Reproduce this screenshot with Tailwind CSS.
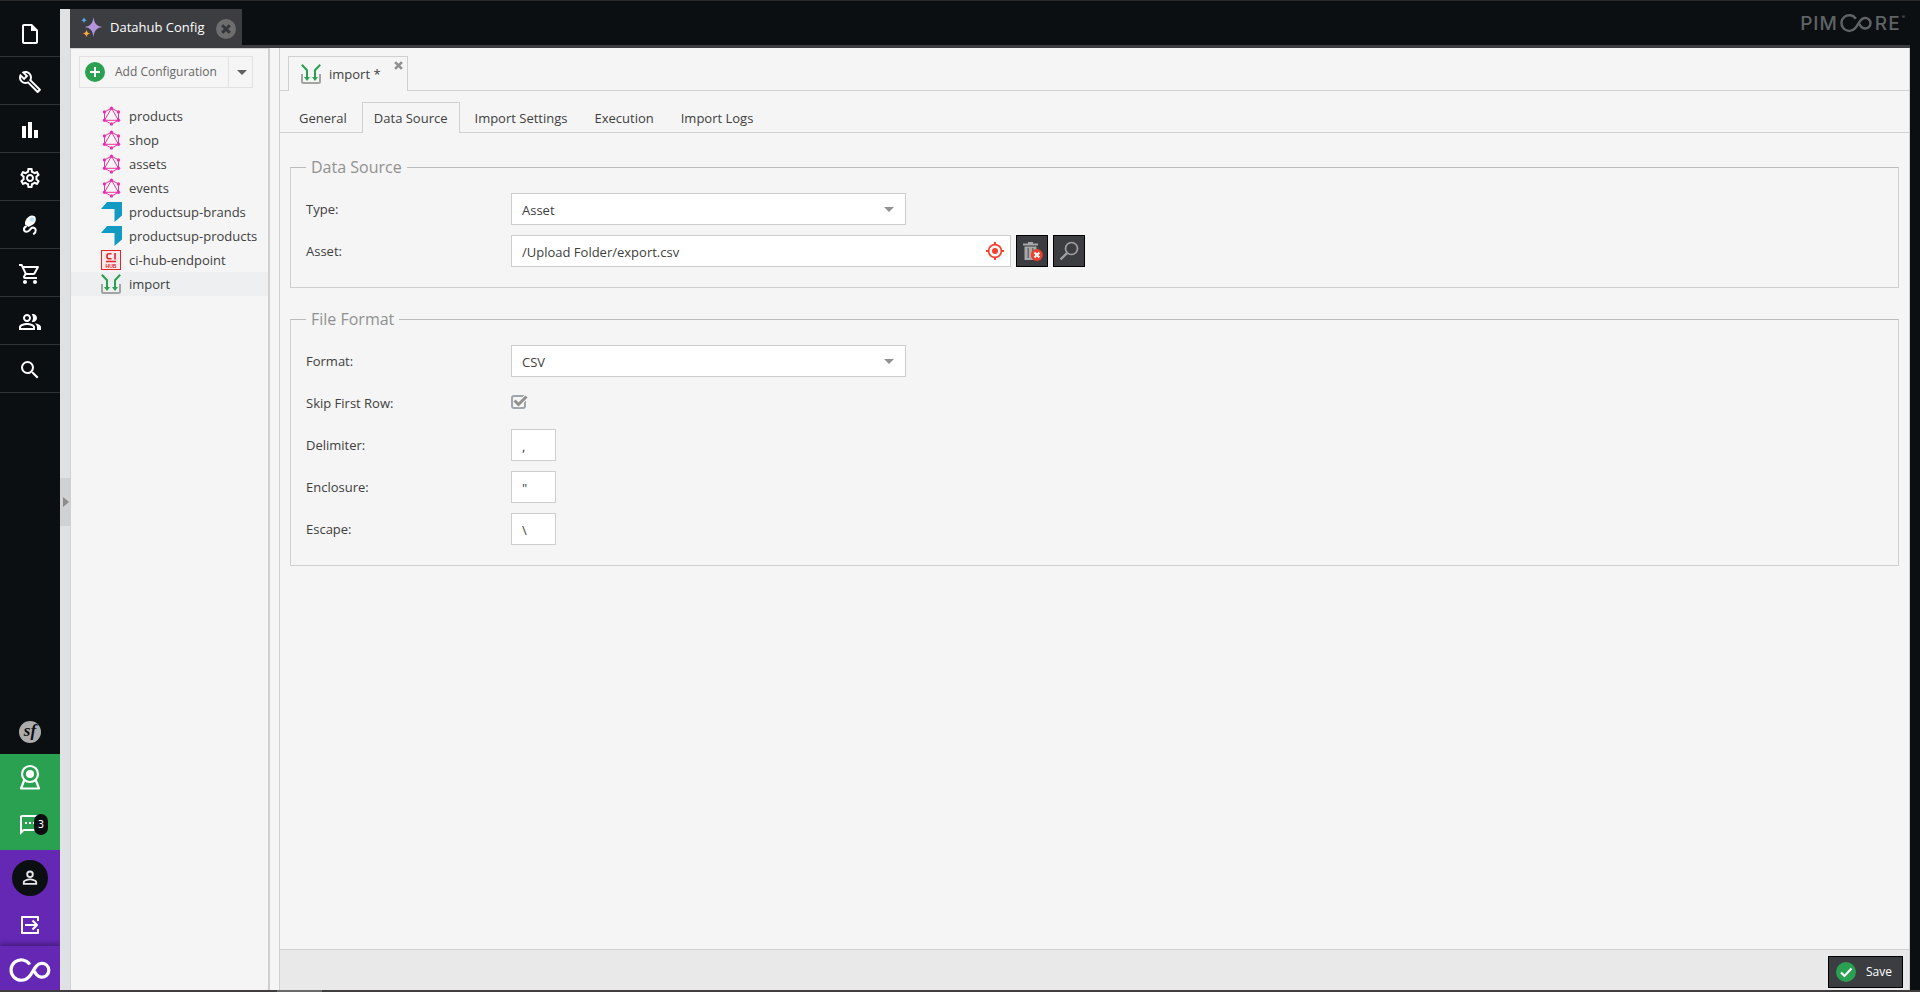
<!DOCTYPE html>
<html lang="en">
<head>
<meta charset="utf-8">
<title>Datahub Config</title>
<script src="https://cdn.jsdelivr.net/npm/@tailwindcss/browser@4"></script>
</head>
<body class="flex min-h-screen flex-col border-t border-[#2b2b2b] bg-[#0c0f12] font-['Open_Sans',sans-serif] text-[13px] leading-5 text-[#404040]">
<svg class="hidden" aria-hidden="true">
  <symbol id="graphql" viewBox="0 0 20 20"><g fill="none" stroke="#e535ab" stroke-width="1"><path d="M10.500 2.200 17.500 6v8.300l-7 3.800-7-3.800V6z"/><path d="M10.500 2.200 3.500 14.300h14z"/></g><g fill="#e535ab"><circle cx="10.500" cy="2.200" r="1.700"/><circle cx="17.500" cy="6" r="1.700"/><circle cx="17.500" cy="14.300" r="1.700"/><circle cx="10.500" cy="18" r="1.700"/><circle cx="3.500" cy="14.300" r="1.700"/><circle cx="3.500" cy="6" r="1.700"/></g></symbol>
  <symbol id="productsup" viewBox="0 0 21 20"><path fill="#129bc2" d="M6 0h15v13.500L13.500 20V7H0z"/></symbol>
  <symbol id="import" viewBox="0 0 20 20"><path fill="none" stroke="#a3a3a3" stroke-width="2" d="M1 10v7.500Q1 19 2.500 19h15q1.500 0 1.500-1.500V10"/><g fill="none" stroke="#2aa151" stroke-width="2"><path d="M.8.8 6 6.200V15M19.200.8 14 6.200V15"/></g><path fill="#2aa151" d="M3 13h6l-3 4zM11 13h6l-3 4z"/></symbol>
  <symbol id="cross" viewBox="0 0 10 10"><path stroke="currentColor" stroke-width="3" d="m1.200 1.200 7.600 7.600M8.800 1.200 1.200 8.800"/></symbol>
  <symbol id="infinity" viewBox="0 0 42 26"><path fill="none" stroke="currentColor" stroke-width="3.200" d="M20.800 7.500A10.200 10.200 0 1 0 20 19.700C23 17 24.500 12 27.500 9A6.900 6.900 0 1 1 27.500 17.500C26.500 16.500 26 15.500 25.500 14"/></symbol>
</svg>

<div class="flex flex-1">
  <nav class="flex w-[60px] shrink-0 flex-col pt-2 text-white" aria-label="Main">
    <button aria-label="File" class="flex h-12 items-center justify-center border-b border-[#303336] pt-[3px]"><svg class="size-6 fill-current" viewBox="0 0 24 24"><path d="M14 2H6c-1.100 0-2 .9-2 2v16c0 1.100.9 2 2 2h12c1.100 0 2-.9 2-2V8zm4 18H6V4h7v5h5z"/></svg></button>
    <button aria-label="Tools" class="flex h-12 items-center justify-center border-b border-[#303336] pt-[3px]"><svg class="size-6 fill-current" viewBox="0 0 24 24"><path d="M22.610 18.990l-9.080-9.080c.93-2.340.45-5.100-1.440-7C9.790.61 6.210.4 3.660 2.260L7.500 6.110 6.080 7.520 2.250 3.690C.39 6.230.6 9.820 2.900 12.110c1.860 1.860 4.570 2.350 6.890 1.480l9.110 9.110c.39.39 1.020.39 1.410 0l2.300-2.300c.4-.38.4-1.010 0-1.410zm-3 1.600l-9.460-9.460c-.61.45-1.290.72-2 .82-1.360.2-2.790-.21-3.830-1.250C3.370 9.760 2.930 8.500 3 7.260l3.090 3.090 4.240-4.240-3.090-3.090c1.240-.07 2.490.37 3.440 1.310 1.080 1.080 1.490 2.570 1.240 3.960-.12.71-.42 1.370-.88 1.960l9.450 9.450-.88.89z"/></svg></button>
    <button aria-label="Reports" class="flex h-12 items-center justify-center border-b border-[#303336] pt-[3px]"><svg class="size-6 fill-current" viewBox="0 0 24 24"><path d="M4 8h4v12H4zM10 4h4v16h-4zM16 12h4v8h-4z"/></svg></button>
    <button aria-label="Settings" class="flex h-12 items-center justify-center border-b border-[#303336] pt-[3px]"><svg class="size-6 fill-current" viewBox="0 0 24 24"><path d="M19.430 12.980c.04-.32.07-.64.07-.98s-.03-.66-.07-.98l2.110-1.650c.19-.15.24-.42.12-.64l-2-3.460c-.09-.16-.26-.25-.44-.25-.06 0-.12.010-.17.030l-2.490 1c-.52-.4-1.080-.73-1.690-.98l-.38-2.650C14.460 2.180 14.250 2 14 2h-4c-.25 0-.46.180-.49.420l-.38 2.650c-.61.250-1.170.590-1.690.980l-2.490-1c-.06-.02-.12-.03-.18-.03-.17 0-.34.090-.43.250l-2 3.460c-.13.220-.07.490.12.640l2.110 1.650c-.04.320-.07.650-.07.980s.03.660.07.980l-2.110 1.650c-.19.150-.24.420-.12.640l2 3.460c.09.160.26.250.44.250.06 0 .12-.01.17-.03l2.490-1c.52.400 1.080.730 1.690.980l.38 2.650c.03.240.24.420.49.420h4c.25 0 .46-.18.49-.42l.38-2.650c.61-.25 1.170-.59 1.690-.98l2.490 1c.06.020.12.030.18.030.17 0 .34-.09.430-.25l2-3.460c.12-.22.070-.49-.12-.64zm-1.980-1.710c.04.310.05.520.05.730s-.02.430-.05.730l-.14 1.130.89.700 1.080.840-.7 1.210-1.270-.51-1.040-.42-.9.680c-.43.320-.84.560-1.250.730l-1.060.430-.16 1.130-.2 1.350h-1.400l-.19-1.350-.16-1.130-1.060-.43c-.43-.18-.83-.41-1.230-.71l-.91-.7-1.060.430-1.270.510-.7-1.210 1.080-.84.890-.7-.14-1.130c-.03-.31-.05-.54-.05-.74s.02-.43.050-.73l.14-1.130-.89-.7-1.080-.84.700-1.210 1.270.510 1.040.420.900-.68c.43-.32.840-.56 1.250-.73l1.060-.43.160-1.130.2-1.350h1.390l.19 1.350.16 1.130 1.060.430c.43.180.83.410 1.230.710l.91.700 1.060-.43 1.270-.51.700 1.210-1.070.850-.89.700zM12 8c-2.210 0-4 1.790-4 4s1.790 4 4 4 4-1.790 4-4-1.790-4-4-4zm0 6c-1.100 0-2-.9-2-2s.9-2 2-2 2 .9 2 2-.9 2-2 2z"/></svg></button>
    <button aria-label="Data hub" class="flex h-12 items-center justify-center border-b border-[#303336]"><svg class="size-6" viewBox="0 0 24 24"><path fill="none" stroke="#fff" stroke-width="2" stroke-linecap="round" d="M8 13.500c-3 1.500-2.500 5 .5 5.300 3.500 0 3.500-4.300 6.500-4.300 3.500.5 3.500 4.500.8 6.300"/><path fill="#fff" d="M7 11.500c-.5-3 1-6 4-8 2.500-1.600 6-1 6.700 1.500.6 2.500-.7 5-2.700 6.500l-4.500 2.500z"/><circle cx="14" cy="6.500" r="2.200" fill="#b5e2fb"/></svg></button>
    <button aria-label="Ecommerce" class="flex h-12 items-center justify-center border-b border-[#303336] pt-[3px]"><svg class="size-6 fill-current" viewBox="0 0 24 24"><path d="M15.550 13c.75 0 1.410-.41 1.750-1.030l3.580-6.490c.37-.66-.11-1.480-.87-1.480H5.210l-.94-2H1v2h2l3.600 7.590-1.350 2.440C4.520 15.370 5.480 17 7 17h12v-2H7l1.100-2h7.450zM6.160 6h12.150l-2.760 5H8.530L6.160 6zM7 18c-1.100 0-1.990.9-1.990 2S5.900 22 7 22s2-.9 2-2-.9-2-2-2zm10 0c-1.100 0-1.990.9-1.990 2s.89 2 1.990 2 2-.9 2-2-.9-2-2-2z"/></svg></button>
    <button aria-label="Customers" class="flex h-12 items-center justify-center border-b border-[#303336] pt-[3px]"><svg class="size-6 fill-current" viewBox="0 0 24 24"><path d="M16.670 13.130C18.040 14.060 19 15.320 19 17v3h4v-3c0-2.180-3.570-3.470-6.330-3.870zM15 12c2.210 0 4-1.790 4-4s-1.790-4-4-4c-.47 0-.91.100-1.330.240C14.500 5.270 15 6.580 15 8s-.5 2.730-1.330 3.760c.42.140.86.240 1.330.240zM9 12c2.210 0 4-1.790 4-4s-1.790-4-4-4-4 1.790-4 4 1.790 4 4 4zm0-6c1.100 0 2 .9 2 2s-.9 2-2 2-2-.9-2-2 .9-2 2-2zm0 7c-2.670 0-8 1.340-8 4v3h16v-3c0-2.660-5.330-4-8-4zm6 5H3v-.99C3.200 16.290 6.300 15 9 15s5.800 1.290 6 2v1z"/></svg></button>
    <button aria-label="Search" class="flex h-12 items-center justify-center border-b border-[#303336] pt-[3px]"><svg class="size-6 fill-current" viewBox="0 0 24 24"><path d="M15.500 14h-.79l-.28-.27A6.470 6.470 0 0 0 16 9.500 6.500 6.500 0 1 0 9.500 16c1.610 0 3.090-.59 4.230-1.570l.27.280v.79l5 4.990L20.490 19zm-6 0C7.010 14 5 11.990 5 9.500S7.010 5 9.500 5 14 7.010 14 9.500 11.990 14 9.500 14z"/></svg></button>

    <div class="mt-auto flex flex-col">
      <button aria-label="Symfony profiler" class="flex h-11 items-center justify-center"><span class="flex size-[22px] items-center justify-center rounded-full bg-[#adadad] pb-1 font-['Liberation_Serif',serif] text-[17px] font-bold italic leading-none text-[#0c0f12]">sf</span></button>
      <div class="flex flex-col bg-[#2aa150]">
        <button aria-label="Maintenance" class="flex h-12 items-center justify-center pb-[2px]"><svg class="h-[26px] w-[22px]" viewBox="0 0 22 26" fill="none" stroke="#fff" stroke-width="2.200"><circle cx="11" cy="10" r="8"/><circle cx="11" cy="10" r="4" fill="#fff" stroke="none"/><path stroke-linejoin="round" d="M5.500 15.500 2 24.500h18l-3.500-9"/></svg></button>
        <button aria-label="Notifications, 3 new" class="relative flex h-12 items-center justify-center pb-[2px]"><svg class="size-6 fill-current" viewBox="0 0 24 24"><path d="M20 2H4c-1.100 0-2 .9-2 2v18l4-4h14c1.100 0 2-.9 2-2V4c0-1.100-.9-2-2-2zm0 14H5.200L4 17.200V4h16zM7 9h2v2H7zM11 9h2v2h-2zM15 9h2v2h-2z"/></svg><span class="absolute left-[34px] top-3 flex h-[21px] w-[14px] items-center justify-center rounded-full bg-[#0c0f12] font-['DejaVu_Sans',sans-serif] text-[10px] leading-none">3</span></button>
      </div>
      <div class="flex flex-col bg-[#6428b4]">
        <button aria-label="Profile" class="flex h-14 items-center justify-center"><span class="flex size-9 items-center justify-center rounded-full bg-[#0c0f12]"><svg class="size-[18px] fill-[#e8e8e8]" viewBox="0 0 24 24"><path d="M12 4.500a2.500 2.500 0 1 1 0 5 2.500 2.500 0 0 1 0-5zm0 10.500c3.300 0 7 1.600 7 2.300V18.500H5v-1.200C5 16.600 8.700 15 12 15zm0-13a5 5 0 1 0 0 10 5 5 0 0 0 0-10zm0 10.700c-3.200 0-9.500 1.600-9.500 4.800V21h19v-3.500c0-3.200-6.300-4.800-9.500-4.800z"/></svg></span></button>
        <button aria-label="Logout" class="flex h-10 items-center justify-center pb-[2px]"><svg class="h-[18px] w-5" viewBox="0 0 20 18" fill="none" stroke="#fff" stroke-width="2"><path stroke-linejoin="round" d="M18 5V1H2v16h16v-4M5 9h12M12.500 4.500 17 9l-4.500 4.500"/></svg></button>
        <a href="#" aria-label="Pimcore" class="flex h-11 items-center justify-center pt-1 shadow-[0_-2px_5px_rgba(0,0,0,0.35)]"><svg class="h-[26px] w-[42px]"><use href="#infinity"/></svg></a>
      </div>
    </div>
  </nav>

  <div class="mt-2 flex w-[10px] shrink-0 items-center bg-[#e0e1e3]">
    <button aria-label="Expand navigation panel" class="mt-1 flex h-12 w-full items-center justify-center bg-[#d0d1d2] pl-[2px]"><svg class="h-[10px] w-[6px] fill-[#8c8c8c]" viewBox="0 0 6 10"><path d="M0 0v10l6-5z"/></svg></button>
  </div>

  <div class="flex min-w-0 flex-1 flex-col pr-[10px] pt-2">
    <header class="flex h-[39px]">
      <div class="flex w-[172px] items-center bg-[#3b3d41] pb-1 pl-[11px] pr-[6px] text-white">
        <svg class="h-6 w-[22px]" viewBox="0 0 22 24"><path fill="#b494dc" d="M12.500 2c1 6.500 2.500 9 9 10-6.500 1-8 3.500-9 10-1-6.500-2.500-9-9-10 6.500-1 8-3.500 9-10z"/><path fill="#5dadec" d="M3 2c.4 2.200 1 2.800 3.200 3.200C4 5.600 3.400 6.200 3 8.400 2.600 6.200 2 5.600-.2 5.200 2 4.800 2.600 4.200 3 2z"/><path fill="#ffa83c" d="M5.500 14.500c.5 2.600 1.200 3.400 3.700 3.900-2.500.5-3.200 1.300-3.700 3.900-.5-2.600-1.200-3.400-3.700-3.900 2.500-.5 3.200-1.300 3.700-3.900z"/></svg>
        <span class="ml-[7px] flex-1 whitespace-nowrap">Datahub Config</span>
        <button aria-label="Close Datahub Config" class="mt-1 flex size-5 items-center justify-center rounded-full bg-[#6e6e6e] text-[#33363a]"><svg class="size-[10px]"><use href="#cross"/></svg></button>
      </div>
      <div class="flex flex-1 items-start justify-end border-b-3 border-[#3b3d41] pr-[5px]">
        <div class="flex h-[28px] items-center font-['Inter',sans-serif] text-[19px] font-medium leading-none text-[#5f6366]" aria-label="Pimcore">
          <span class="flex gap-px"><span>P</span><span>I</span><span>M</span></span>
          <svg class="ml-[2px] h-5 w-[34px]"><use href="#infinity"/></svg>
          <span class="ml-[2px] flex gap-px"><span>R</span><span>E</span></span><span class="mb-3 ml-[2px] text-[5px]">®</span>
        </div>
      </div>
    </header>

    <div class="flex flex-1 bg-[#f5f5f5]">
      <aside class="w-[200px] shrink-0 border-l border-r-2 border-t border-l-[#d0d0d0] border-r-[#cfcfcf] border-t-[#d0d0d0]">
        <div class="ml-2 mt-[7px] flex h-8 w-[174px] border border-[#e1e1e1] text-[#666]">
          <button class="flex flex-1 items-center gap-[10px] whitespace-nowrap pl-[5px] text-[12px]">
            <svg class="size-5" viewBox="0 0 20 20"><circle cx="10" cy="10" r="10" fill="#2aa151"/><path stroke="#fff" stroke-width="2" d="M10 5v10M5 10h10"/></svg>
            Add Configuration
          </button>
          <button aria-label="More configuration types" class="flex w-6 items-center justify-center border-l border-[#e1e1e1] pl-[3px]"><svg class="h-[5px] w-[10px] fill-[#606060]" viewBox="0 0 10 5"><path d="M0 0h10L5 5z"/></svg></button>
        </div>
        <ul class="mt-4">
          <li><a href="#" class="flex h-6 items-center gap-2 pl-[30px]"><svg class="size-5"><use href="#graphql"/></svg>products</a></li>
          <li><a href="#" class="flex h-6 items-center gap-2 pl-[30px]"><svg class="size-5"><use href="#graphql"/></svg>shop</a></li>
          <li><a href="#" class="flex h-6 items-center gap-2 pl-[30px]"><svg class="size-5"><use href="#graphql"/></svg>assets</a></li>
          <li><a href="#" class="flex h-6 items-center gap-2 pl-[30px]"><svg class="size-5"><use href="#graphql"/></svg>events</a></li>
          <li><a href="#" class="flex h-6 items-center gap-[7px] pl-[30px]"><svg class="h-5 w-[21px]"><use href="#productsup"/></svg>productsup-brands</a></li>
          <li><a href="#" class="flex h-6 items-center gap-[7px] pl-[30px]"><svg class="h-5 w-[21px]"><use href="#productsup"/></svg>productsup-products</a></li>
          <li><a href="#" class="flex h-6 items-center gap-2 pl-[30px]"><svg class="size-5" viewBox="0 0 20 20"><rect x=".5" y=".5" width="19" height="19" fill="#fde9e9" stroke="#e2242b"/><path fill="none" stroke="#e2242b" stroke-width="1.600" d="M10.500 3.800H8a2 2 0 0 0-2 2v.9a2 2 0 0 0 2 2h2.500M14 3v6.500M5 11.500h10"/><text x="10" y="17.500" fill="#e2242b" font-family="Liberation Sans, sans-serif" font-size="5" font-weight="bold" text-anchor="middle">HUB</text></svg>ci-hub-endpoint</a></li>
          <li><a href="#" aria-current="true" class="flex h-6 items-center gap-2 bg-[#eeeff1] pl-[30px]"><svg class="size-5"><use href="#import"/></svg>import</a></li>
        </ul>
      </aside>

      <main class="ml-[9px] flex min-w-0 flex-1 flex-col border-x border-[#d0d0d0]">
        <div class="flex h-[43px] items-end border-b border-[#d0d0d0] pl-2">
          <div class="-mb-px flex h-[35px] w-[120px] border border-b-0 border-[#d0d0d0] bg-[#f5f5f5] pl-3 pr-1 text-[#404040]">
            <button class="flex flex-1 items-center gap-2"><svg class="size-5"><use href="#import"/></svg>import *</button>
            <button aria-label="Close import" class="mt-1 size-[9px] text-[#919191]"><svg class="size-[9px]"><use href="#cross"/></svg></button>
          </div>
        </div>
        <div class="flex h-[42px] items-end gap-[3px] border-b border-[#d0d0d0] pl-[7px]" role="tablist">
          <button role="tab" class="h-[30px] px-3 pt-[2px]">General</button>
          <button role="tab" aria-selected="true" class="-mb-px h-[31px] border border-b-0 border-[#d0d0d0] bg-[#f5f5f5] px-[11px]">Data Source</button>
          <button role="tab" class="h-[30px] px-3 pt-[2px]">Import Settings</button>
          <button role="tab" class="h-[30px] px-3 pt-[2px]">Execution</button>
          <button role="tab" class="h-[30px] px-3 pt-[2px]">Import Logs</button>
        </div>

        <form class="flex-1 pl-[10px] pr-[10px] pt-[22px]">
          <fieldset class="border border-[#cfcfcf] border-t-[#bababa] px-[15px] pb-5">
            <legend class="px-[5px] text-[16px] leading-6 text-[#919191]">Data Source</legend>
            <div class="flex flex-col gap-[10px] pt-[14px]">
              <div class="flex h-8 items-center">
                <label for="type" class="w-[205px]">Type:</label>
                <div class="relative h-full w-[395px]"><select id="type" class="h-full w-full appearance-none border border-[#cecece] bg-white px-[10px] pt-[2px]"><option>Asset</option></select><svg class="pointer-events-none absolute right-3 top-[14px] h-[5px] w-[10px] fill-[#919191]" viewBox="0 0 10 5"><path d="M0 0h10L5 5z"/></svg></div>
              </div>
              <div class="flex h-8 items-center">
                <label for="asset" class="w-[205px]">Asset:</label>
                <div class="flex h-full w-[500px] border border-[#cecece] bg-white pr-[6px]">
                  <input id="asset" class="min-w-0 flex-1 px-[10px] pt-[2px] outline-none" value="/Upload Folder/export.csv">
                  <svg class="mt-[6px] size-[18px]" viewBox="0 0 18 18" fill="none" stroke="#f5402d"><circle cx="9" cy="9" r="6.400" stroke-width="1.700"/><circle cx="9" cy="9" r="3" fill="#f5402d" stroke="none"/><path stroke-width="2" d="M9 0v3M9 15v3M0 9h3M15 9h3"/></svg>
                </div>
                <button type="button" aria-label="Remove asset" class="ml-[5px] flex size-8 items-center justify-center border border-black bg-[#3b3d41] pl-[2px]"><svg class="size-5" viewBox="0 0 20 20"><path fill="#a8a8a8" d="M0 2.500h5V1h5v1.500h5v2H0zM1.500 5.500h12V19h-12z"/><path stroke="#66686b" stroke-width="1.500" d="M5.200 7v10M9.700 7v10"/><circle cx="13.800" cy="14" r="6" fill="#f0412f"/><path stroke="#fff" stroke-width="2" d="m11.500 11.500 4.800 5M16.300 11.500l-4.800 5"/></svg></button>
                <button type="button" aria-label="Search asset" class="ml-[5px] flex size-8 items-center justify-center border border-black bg-[#3b3d41]"><svg class="size-5" viewBox="0 0 20 20" fill="none" stroke="#a0a0a0"><circle cx="12.500" cy="7.500" r="6" stroke-width="1.700"/><path stroke-width="2.400" d="M8.300 11.800 1.500 18.500"/></svg></button>
              </div>
            </div>
          </fieldset>

          <fieldset class="mt-[19px] border border-[#cfcfcf] border-t-[#bababa] px-[15px] pb-5">
            <legend class="px-[5px] text-[16px] leading-6 text-[#919191]">File Format</legend>
            <div class="flex flex-col gap-[10px] pt-[14px]">
              <div class="flex h-8 items-center">
                <label for="format" class="w-[205px]">Format:</label>
                <div class="relative h-full w-[395px]"><select id="format" class="h-full w-full appearance-none border border-[#cecece] bg-white px-[10px] pt-[2px]"><option>CSV</option></select><svg class="pointer-events-none absolute right-3 top-[14px] h-[5px] w-[10px] fill-[#919191]" viewBox="0 0 10 5"><path d="M0 0h10L5 5z"/></svg></div>
              </div>
              <div class="flex h-8 items-center">
                <label for="skip" class="w-[205px]">Skip First Row:</label>
                <div class="relative mb-[2px] h-4 w-[17px]">
                  <input id="skip" type="checkbox" checked class="peer absolute left-0 top-[1px] h-[14px] w-[15px] appearance-none rounded-[3px] border-2 border-[#a0a4ac]">
                  <svg class="pointer-events-none absolute inset-0 hidden h-4 w-[17px] peer-checked:block" viewBox="0 0 17 16" fill="none"><path stroke="#f5f5f5" stroke-width="5" d="m4.500 6.500 3.500 3.500L15.500 2.500"/><path stroke="#919191" stroke-width="3" d="m3.500 6.500 4 4L15.500 2.500"/></svg>
                </div>
              </div>
              <div class="flex h-8 items-center">
                <label for="delimiter" class="w-[205px]">Delimiter:</label>
                <input id="delimiter" class="h-full w-[45px] border border-[#cecece] bg-white px-[10px] pt-[2px]" value=",">
              </div>
              <div class="flex h-8 items-center">
                <label for="enclosure" class="w-[205px]">Enclosure:</label>
                <input id="enclosure" class="h-full w-[45px] border border-[#cecece] bg-white px-[10px] pt-[2px]" value="&quot;">
              </div>
              <div class="flex h-8 items-center">
                <label for="escape" class="w-[205px]">Escape:</label>
                <input id="escape" class="h-full w-[45px] border border-[#cecece] bg-white px-[10px] pt-[2px]" value="\">
              </div>
            </div>
          </fieldset>
        </form>

        <footer class="flex h-[41px] items-center justify-end border-t border-[#cfd0d0] bg-[#e9e9e9] pr-[6px] pt-[4px]">
          <button class="flex h-8 items-center gap-[10px] border border-black bg-[#3b3d41] pl-[7px] pr-[10px] text-[12px] text-white">
            <svg class="size-5" viewBox="0 0 20 20"><circle cx="10" cy="10" r="10" fill="#2aa151"/><path fill="none" stroke="#fff" stroke-width="2.200" d="m5 10.500 3.500 3.500L15.500 6.500"/></svg>
            Save
          </button>
        </footer>
      </main>
    </div>
  </div>
</div>
<div class="flex h-[2px] bg-[#403d3f]"><div class="ml-[277px] w-[45px] bg-[#6a6a6a]"></div></div>
</body>
</html>
